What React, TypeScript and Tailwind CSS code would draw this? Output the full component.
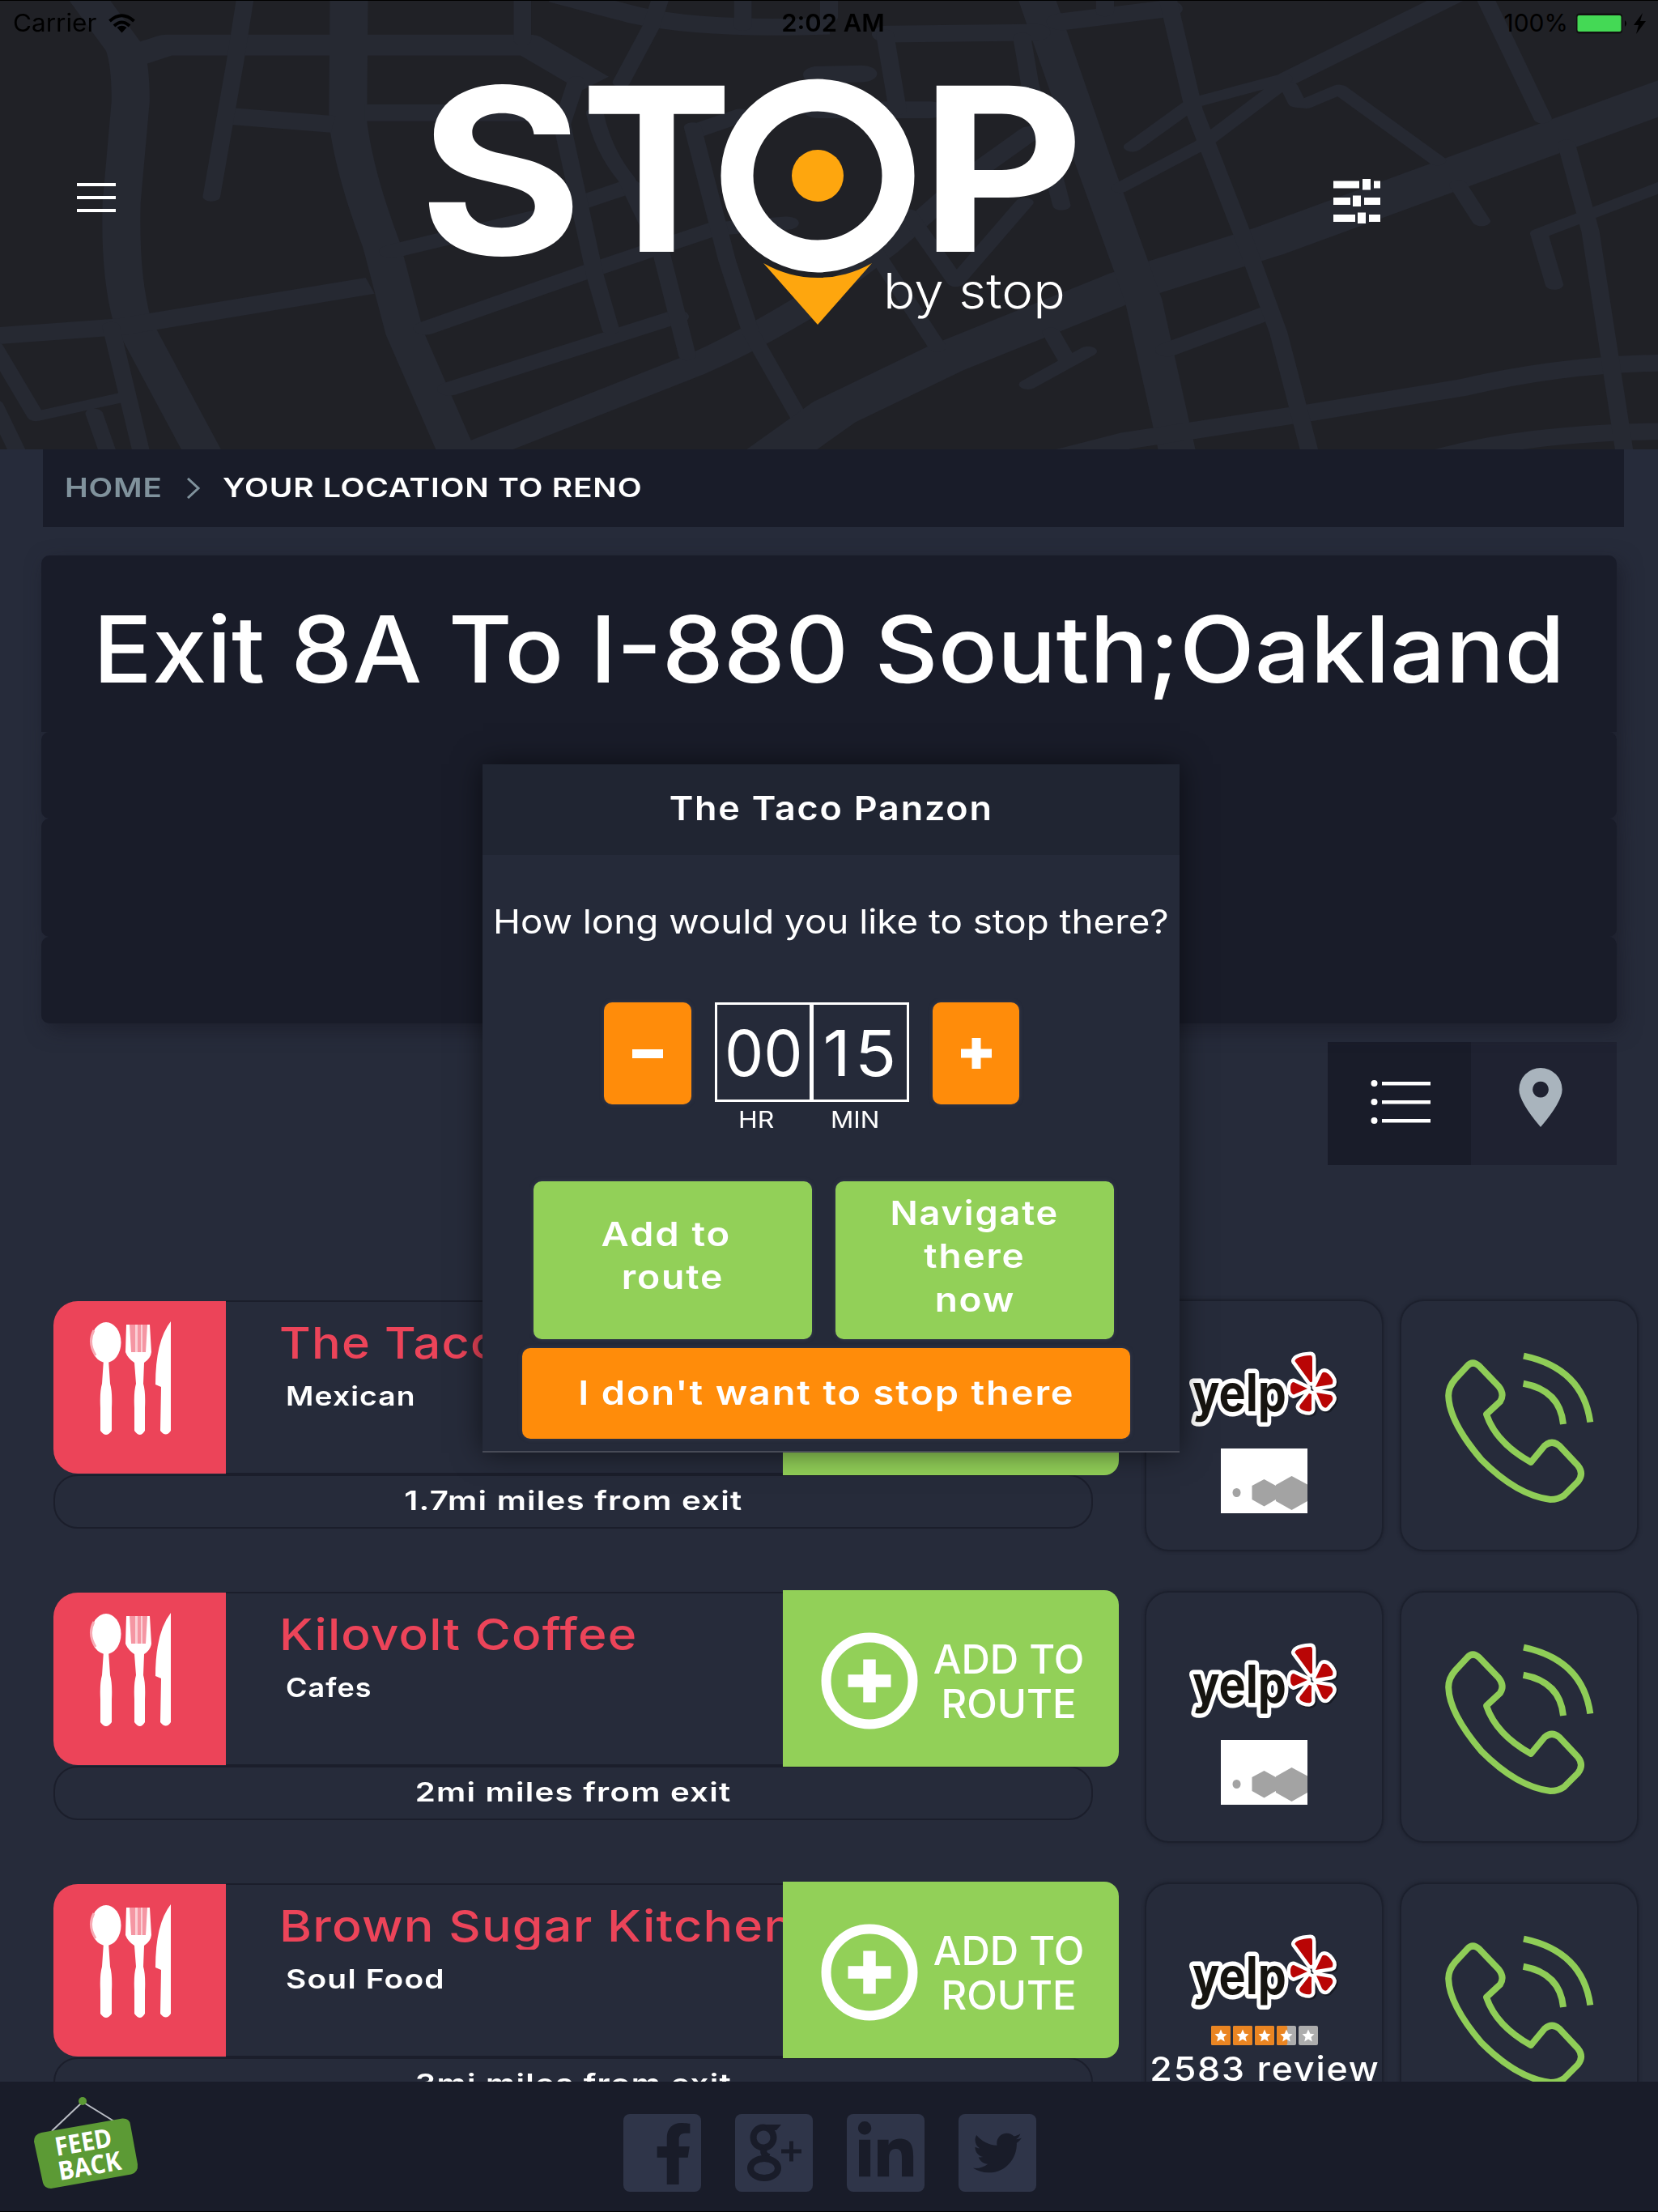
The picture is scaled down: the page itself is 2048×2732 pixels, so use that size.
import type { ReactNode } from "react";
import { FaFacebookF, FaLinkedinIn, FaTwitter } from "react-icons/fa";

function T({ className = "", children }: { className?: string; children: ReactNode }) {
  return <span className={"inline-block whitespace-nowrap " + className}>{children}</span>;
}

function MapBackdrop() {
  return (
    <svg className="absolute inset-0 h-full w-full" viewBox="0 0 2048 555" fill="none" stroke="#262932" preserveAspectRatio="none">
      <g transform="scale(0.6531 0.3571)" strokeLinejoin="round">
        <path strokeWidth="72" d="M165-10 L235 165 Q247 220 247 350 L230 700 Q226 950 250 1110 L385 1570M660-10 L658 420 Q670 600 722 850 L765 1150 L865 1570M250 195 L315 156 L1000 156 L1125 290M880 1575 L1310 1265 Q1420 1180 1568 1010" />
        <path strokeWidth="58" d="M1050-20 L1200 52 Q1330 105 1568 90M435 402 L630 430M690 390 L1080 390M-10 1162 L230 1130 L700 988M1562 262 L1600 258" />
        <path strokeWidth="46" strokeLinecap="round" d="M740 870 L1010 752M1100 700 L1190 645M805 1135 L1110 940 L1350 792M1350 792 L1488 772M850 1345 L1280 1095M1320 450 L1400 400" />
        <path strokeWidth="33" strokeLinecap="round" d="M464-10 L446 200 L400 680M988-10 L988 140M1250-10 L1232 90 L1175 285M1090 280 L1063 430 L1125 950 L1155 1140M1125 390 Q1140 520 1185 620 L1250 870 L1300 1230M1310 440 L1375 900 L1420 1150 L1510 1440M1405-10 L1405 90M210 1130 L268 1570M-10 1200 L68 1440 L230 1375M178 1430 L205 1570M-10 1400 L35 1570" />
      </g>
      <g transform="translate(1024 0) scale(0.6531 0.3571)" strokeLinejoin="round" strokeLinecap="round">
        <path strokeWidth="106" d="M-170 1660 L10 1425 L220 1240 L560 990 L830 835 L1600 320" />
        <path strokeWidth="70" d="M390-20 L500 560 L595 1040 L662 1590" />
        <path strokeWidth="58" d="M110 118 L390 112M-20 258 L62 255M-20 380 L190 380M440 75 L640 30M400 1600 L560 1525 L900 1430 L1200 1340 Q1400 1255 1600 1255M1140 1590 Q1320 1492 1600 1492" />
        <path strokeWidth="46" d="M1190-20 L870 270M640 1210 L830 1082M380 460 L265 610 L110 860 L0 1010" />
        <path strokeWidth="34" d="M640-10 L690 380 L790 850 L850 1150 L910 1570M860 272 L690 355 L574 508M850 300 L705 500 L550 650M870 300 L885 355 L902 358 L965 310 L1150 555M1240-10 L1350 410M1395 500 L1440 800 L1505 1570M1190 640 L1234 765M1590 635 L1343 808 L1372 985M106 120 L130 380M365 130 L380 290 L440 710M150 740 L240 975 L370 700M80 850 L205 1200M420 1150 L450 1245M490 1215 L376 1330M522-10 L522 40M0-10 L0 60" />
      </g>
    </svg>
  );
}

function Logo() {
  return (
    <svg className="h-[320px] w-[820px] overflow-visible" viewBox="520 90 820 320">
      <g fill="#fff" fontFamily="Inter" fontWeight="700" fontSize="282">
        <text x="0" y="0" transform="translate(517 314) scale(1.1 1.01)">S</text>
        <text x="0" y="0" transform="translate(717 311)">T</text>
        <text x="0" y="0" transform="translate(1136 311) scale(1.115 1)">P</text>
      </g>
      <path d="M943 325 A134 134 0 0 0 1077 325 L1010 401Z" fill="#fea60e" />
      <circle cx="1010" cy="217" r="99.5" fill="none" stroke="#fff" strokeWidth="40" />
      <circle cx="1010" cy="217" r="32" fill="#fea60e" />
      <text x="0" y="0" transform="translate(1091 381) scale(1.095 1)" fill="#fff" fontFamily="Inter" fontWeight="300" fontSize="60">by stop</text>
    </svg>
  );
}

function Header() {
  return (
    <header className="relative h-[555px] shrink-0 bg-[#202126]">
      <MapBackdrop />
      <div className="relative flex h-[57px] items-center border-t border-black pb-[1px] text-[30px] text-black">
        <div className="flex w-[900px] items-center pl-[16px]">
          <T className="origin-left scale-x-[1.05]">Carrier</T>
          <svg className="ml-[20px] h-[24px] w-[33px]" viewBox="0 0 33 24" fill="none" stroke="#000" strokeWidth="4">
            <path d="M1.5 9 Q16.500 -4.500 31.500 9M7 15 Q16.500 6 26 15" />
            <path d="M16.500 23.500 L10.500 17 Q16.500 12.500 22.500 17Z" fill="#000" stroke="none" />
          </svg>
        </div>
        <div className="flex w-[257px] justify-center">
          <T className="scale-x-[1.03] font-semibold">2:02 AM</T>
        </div>
        <div className="ml-auto flex items-center pr-[15px]">
          <T className="mr-[9px] origin-right">100%</T>
          <svg className="h-[28px] w-[87px]" viewBox="0 0 87 28">
            <rect x="1" y="1.500" width="57" height="25" rx="4" fill="#111" />
            <rect x="2.500" y="4" width="54" height="20" rx="2" fill="#44d955" />
            <path d="M61 10 Q65 14 61 18Z" fill="#000" />
            <path d="M83 1 L72 16 H78 L75 27 L87 11 H80Z" fill="#000" />
          </svg>
        </div>
      </div>
      <div className="relative flex pl-[95px]">
        <div className="mt-[169px] flex h-[36px] w-[48px] flex-col justify-between">
          <i className="h-[4px] bg-white" />
          <i className="h-[4px] bg-white" />
          <i className="h-[4px] bg-white" />
        </div>
        <div className="ml-[377px] mt-[33px]">
          <Logo />
        </div>
        <svg className="ml-[306px] mt-[164px] h-[57px] w-[60px]" viewBox="0 0 60 57" fill="#fff">
          <path d="M1 2.500h32v9H1zM37 0h10v13.500H37zM51 2.500h8v9h-8zM1 23h21v9H1zM25 20.500h10V34H25zM39 23h20v9H39zM1 44h27v9H1zM31 41.500h10V55H31zM45 44h14v9H45z" />
        </svg>
      </div>
    </header>
  );
}

const seg = "rounded-[10px] bg-[#191c29]";

function ExitCard() {
  return (
    <section className="ml-[51px] mt-[35px] w-[1946px] shrink-0 drop-shadow-[6px_8px_12px_rgba(20,20,32,0.5)]">
      <div className="flex h-[218px] justify-center rounded-t-[10px] bg-[#191c29] pt-[46px]">
        <T className="h-[140px] scale-x-[1.062] text-[114px] font-medium leading-[140px] text-white">Exit 8A To I-880 South;Oakland</T>
      </div>
      <div className={seg + " h-[107px]"} />
      <div className={seg + " h-[146px]"} />
      <div className={seg + " h-[107px]"} />
    </section>
  );
}

function ViewToggle() {
  return (
    <div className="ml-auto mr-[51px] mt-[23px] flex h-[152px] w-[357px] shrink-0">
      <div className="flex w-[177px] items-center justify-center bg-[#191c29] pb-[4px] pl-[4px]">
        <svg className="h-[60px] w-[76px]" viewBox="0 0 76 60" fill="#fff">
          <circle cx="4.500" cy="7" r="4" />
          <circle cx="4.500" cy="30" r="4" />
          <circle cx="4.500" cy="53" r="4" />
          <path d="M14 5h60v4.500H14zM14 28h60v4.500H14zM14 51h60v4.500H14z" />
        </svg>
      </div>
      <div className="flex w-[180px] items-center justify-center bg-[#1f2231] pr-[8px]">
        <svg className="mb-[16px] h-[73px] w-[54px]" viewBox="0 0 54 74" fill="#a9b4bd" fillRule="evenodd">
          <path d="M27 0 A27 27 0 0 1 54 27 Q54 42 27 74 Q0 42 0 27 A27 27 0 0 1 27 0Z M27 17 a10 10 0 1 0 .01 0Z" />
        </svg>
      </div>
    </div>
  );
}

function Utensils() {
  return (
    <svg className="ml-[43px] mt-[24px] h-[144px] w-[106px]" viewBox="0 0 106 144" fill="#fff">
      <ellipse cx="22" cy="27" rx="18.500" ry="25" />
      <path d="M7 12 Q-1 27 9 43" fill="none" stroke="#f8aab4" strokeWidth="3" />
      <path d="M19 48 h6 l2 30 q3 10 2 30 v28 q-7 10-14 0 v-28 q-1-20 2-30z" />
      <path d="M48 5 H74 L77 36 Q76 44 68 47 H55 Q49 44 48 36Z" fill="#f596a3" />
      <path d="M47 5 h4 l2 34 h18 l2-34 h3 l2 34 q-1 8-9 13 l-1 26 q3 10 2 30 v28 q-6 10-13 0 v-28 q-1-20 2-30 l-2-26 q-8-5-11-13z" />
      <path d="M58 5h3v34h-3zM65 5h2v34h-2z" fill="#fbd0d6" />
      <path d="M102 1 V136 q-6 9-13 0 L90 82 L83 79 Q83 25 102 1Z" />
    </svg>
  );
}

function AddToRoute() {
  return (
    <button className="flex h-[218px] w-[415px] items-center rounded-r-[18px] bg-[#92d058] pl-[47px]">
      <svg className="mt-[6px] h-[120px] w-[120px]" viewBox="0 0 120 120" fill="none" stroke="#fff">
        <circle cx="60" cy="60" r="53.500" strokeWidth="12" />
        <path d="M33.500 60h53M60 33.500v53" strokeWidth="15.500" />
      </svg>
      <span className="ml-[9px] flex w-[206px] flex-col items-center pt-[8px] text-[49px] font-medium leading-[55px] text-white">
        <T>ADD TO</T>
        <T>ROUTE</T>
      </span>
    </button>
  );
}

function YelpLogo() {
  const petals =
    "M139.400 21 Q141 15 158.600 14 Q161 14 161 18 V46 Q159 49 157 45Z M165 53 L173 36 Q175.600 33 181 37 Q188 44 186 49 L184 50Z M166 60 L184 63 Q188 66 185 71 L179 78 Q176 80 173 76Z M160 62 V81 Q159 85 150 82 Q143 79 146 75 L157 61Z M155 55 L138 62.500 Q134 61 134 55 Q134 47 138 47Z";
  return (
    <svg className="h-[105px] w-[200px]" viewBox="0 0 200 105" strokeLinejoin="round">
      <g transform="translate(2 2)" opacity="0.35" stroke="#000" strokeWidth="9">
        <path d={petals} />
      </g>
      <path d={petals} fill="#fff" stroke="#fff" strokeWidth="9" />
      <g fontFamily="Inter" fontWeight="700" fontSize="64">
        <text x="0" y="0" transform="translate(13 83) scale(0.87 1)" fill="#161410" stroke="#fff" strokeWidth="11" paintOrder="stroke">yelp</text>
        <path d={petals} fill="#b90505" />
      </g>
    </svg>
  );
}

function NoPhoto() {
  return (
    <svg className="h-[80px] w-[107px] bg-white" viewBox="0 0 107 80" fill="#a3a3a3">
      <ellipse cx="19.500" cy="54.500" rx="5" ry="5.500" />
      <path d="M53.500 38 L68 46 V63 L53.500 71.500 L38.500 63 V46Z" />
      <path d="M87.500 34 L107 44.500 V65 L87.500 76 L68 65 V45Z" />
    </svg>
  );
}

function Rating() {
  const star = "M12 4.500l2.300 5.200 5.200.500-4 3.800 1.300 5.500-4.800-3-4.800 3 1.300-5.500-4-3.800 5.200-.500z";
  return (
    <div className="flex gap-[3px]">
      {[1, 1, 1, 0.55, 0].map((f, i) => (
        <svg key={i} className="h-[24px] w-[24px]" viewBox="0 0 24 24">
          <rect width="24" height="24" rx="2" fill="#adadad" />
          <rect width={24 * f} height="24" rx="2" fill="#ea8522" />
          <path d={star} fill="#fff" />
        </svg>
      ))}
    </div>
  );
}

function Phone() {
  return (
    <svg className="h-[200px] w-[195px]" viewBox="0 0 195 200" fill="none" stroke="#8fcd57" strokeWidth="8" strokeLinejoin="round">
      <path d="M34.600 27 Q41 20 49 27 L73 52 Q81 62 75 71 L58 86.700 Q70 122 113 146 L130 125.500 Q139 118 148 125.500 L171 150 Q179 160 171 170 L154 187 Q147 192 137 192 Q96 187 52 143 Q12 96 11.200 64 Q11 53 19.700 43Z" />
      <path d="M104 14.700 Q177 30 186.300 96.500M103.600 48.700 Q149 57 153 99" />
    </svg>
  );
}

const card = "h-[311px] w-[295px] rounded-[30px] border-[2px] border-[#1c202d] shadow-[0_0_4px_rgba(20,22,32,0.5)]";

type Place = { name: string; kind: string; distance: string; nameFit: string; kindFit: string; reviews?: string };

const places: Place[] = [
  { name: "The Taco Panzon", kind: "Mexican", distance: "1.7mi miles from exit", nameFit: "scale-x-[1.1]", kindFit: "scale-x-[1.13]" },
  { name: "Kilovolt Coffee", kind: "Cafes", distance: "2mi miles from exit", nameFit: "scale-x-[1.118]", kindFit: "scale-x-[1.09]" },
  { name: "Brown Sugar Kitchen", kind: "Soul Food", distance: "3mi miles from exit", nameFit: "scale-x-[1.13]", kindFit: "scale-x-[1.18]", reviews: "2583 review" },
];

function PlaceRow({ p }: { p: Place }) {
  return (
    <div className="flex h-[360px] shrink-0 pl-[66px]">
      <div className="w-[1316px]">
        <div className="flex h-[218px] items-center">
          <div className="mt-[1px] h-[213px] w-[213px] rounded-l-[30px] bg-[#ec4459]">
            <Utensils />
          </div>
          <div className="mt-[1px] h-[215px] w-[688px] overflow-hidden border-y-[2px] border-[#1b1e2b]">
            <div className="ml-[66px] mt-[20px] h-[60px] overflow-hidden text-[54px] font-medium leading-[62px] text-[#ec4459]">
              <T className={"origin-left tracking-[0.02em] " + p.nameFit}>{p.name}</T>
            </div>
            <div className="ml-[74px] mt-[16px] text-[33px] font-semibold leading-[40px] text-white">
              <T className={"origin-left tracking-[0.03em] " + p.kindFit}>{p.kind}</T>
            </div>
          </div>
          <AddToRoute />
        </div>
        <div className="-mt-[1px] flex h-[67px] w-[1284px] items-center justify-center rounded-[30px] border-[2px] border-[#1b1e2b] pb-[1px] text-[33px] font-semibold text-white">
          <T className="scale-x-[1.22] tracking-[0.03em]">{p.distance}</T>
        </div>
      </div>
      <div className={card + " ml-[32px] mt-[1px] flex flex-col items-center"}>
        <div className="ml-[-3px] mt-[53px]">
          <YelpLogo />
        </div>
        {p.reviews ? (
          <>
            <div className="mt-[17px]">
              <Rating />
            </div>
            <T className="mt-[4px] scale-x-[1.09] pl-[2px] text-[41px] font-medium leading-[50px] tracking-[0.04em] text-white">{p.reviews}</T>
          </>
        ) : (
          <div className="mt-[24px]">
            <NoPhoto />
          </div>
        )}
      </div>
      <div className={card + " ml-[20px] mt-[1px] pl-[47px] pt-[53px]"}>
        <Phone />
      </div>
    </div>
  );
}

const btn = "rounded-[10px] shadow-[0_0_5px_rgba(70,74,100,0.6)]";

function Modal() {
  return (
    <div className="absolute left-[596px] top-[944px] h-[850px] w-[861px] border-b-[2px] border-[#484b57] bg-[#252a39] text-[41px] text-white shadow-[0_0_34px_rgba(0,0,0,0.55)]">
      <div className="flex h-[112px] items-center justify-center bg-[#202532] pb-[3px] font-semibold">
        <T className="scale-x-[1.095] tracking-[0.04em]">The Taco Panzon</T>
      </div>
      <div className="mt-[57px] flex h-[52px] items-center justify-center">
        <T className="scale-x-[1.115]">How long would you like to stop there?</T>
      </div>
      <div className="mt-[73px] flex pl-[150px]">
        <button className={btn + " flex h-[126px] w-[108px] items-center justify-center bg-[#ff8c0a]"}>
          <i className="h-[11px] w-[38px] bg-white" />
        </button>
        <div className="ml-[29px] flex h-[123px] w-[240px] border-[3px] border-white text-[78px]">
          <div className="flex w-[119px] items-center justify-center border-r-[5px] border-white">
            <T className="scale-x-[0.98] pt-[2px]">00</T>
          </div>
          <div className="flex w-[115px] items-center justify-center">
            <T className="scale-x-[1.08] pl-[4px] pt-[2px] tracking-[0.06em]">15</T>
          </div>
        </div>
        <button className={btn + " ml-[29px] flex h-[126px] w-[107px] items-center justify-center bg-[#ff8c0a]"}>
          <svg className="h-[38px] w-[38px]" viewBox="0 0 38 38" fill="#fff">
            <path d="M0 13.500h38v11H0zM13.500 0h11v38h-11z" />
          </svg>
        </button>
      </div>
      <div className="flex h-[38px] items-center pl-[316px] text-[28px]">
        <T className="w-[45px] origin-left scale-x-[1.14]">HR</T>
        <T className="ml-[69px] origin-left scale-x-[1.12]">MIN</T>
      </div>
      <div className="mt-[57px] flex gap-[29px] pl-[63px] text-center font-semibold leading-[53.3px]">
        <div className={btn + " flex h-[195px] w-[344px] flex-col items-center bg-[#92d058] pt-[39px]"}>
          <T className="mr-[16px] scale-x-[1.15] tracking-[0.04em]">Add to</T>
          <T className="scale-x-[1.13] tracking-[0.04em]">route</T>
        </div>
        <div className={btn + " flex h-[195px] w-[344px] flex-col items-center bg-[#92d058] pt-[13px]"}>
          <T className="scale-x-[1.1] tracking-[0.04em]">Navigate</T>
          <T className="scale-x-[1.12] tracking-[0.04em]">there</T>
          <T className="scale-x-[1.12] tracking-[0.04em]">now</T>
        </div>
      </div>
      <div className={btn + " ml-[49px] mt-[11px] flex h-[112px] w-[751px] items-center justify-center bg-[#ff8c0a] pb-[1px] font-semibold"}>
        <T className="scale-x-[1.145] tracking-[0.04em]">I don't want to stop there</T>
      </div>
    </div>
  );
}

function FeedbackSign() {
  return (
    <svg className="ml-[36px] mt-[12px] h-[126px] w-[140px]" viewBox="36 2583 140 126">
      <path d="M64 2632 L102 2596 L141 2620" fill="none" stroke="#b9bcc4" strokeWidth="2" />
      <circle cx="102" cy="2595" r="5" fill="#5c9a35" />
      <path d="M51 2634 L151 2616.500 Q160 2616 161 2624 L170 2673 Q171 2683 162 2685.500 L63 2703 Q55 2703 53 2696 L42 2645 Q42 2636 51 2634Z" fill="#5c9a35" />
      <g fill="#fff" fontFamily="Open Sans" fontWeight="700" fontSize="32">
        <text x="0" y="0" transform="translate(70 2663) rotate(-10) scale(0.92 1)">FEED</text>
        <text x="0" y="0" transform="translate(74 2693) rotate(-10) scale(0.92 1)">BACK</text>
      </g>
    </svg>
  );
}

const tile = "flex h-[96px] w-[96px] items-center justify-center rounded-[8px] bg-[#2f3549] text-[#191c29]";

function Footer() {
  return (
    <footer className="flex h-[161px] shrink-0 border-b border-black bg-[#191c29]">
      <FeedbackSign />
      <div className="ml-[594px] mt-[40px] flex gap-[42px]">
        <div className={tile + " pl-[28px] pt-[1px]"}>
          <FaFacebookF className="h-[76px] w-[48px]" />
        </div>
        <div className={tile}>
          <svg className="h-[96px] w-[96px]" viewBox="0 0 96 96" fill="none" stroke="#191c29">
            <ellipse cx="35" cy="29" rx="12.500" ry="12.500" strokeWidth="8" transform="rotate(-12 35 29)" />
            <path d="M36 13 H57 L51 20 H42Z" fill="#191c29" stroke="none" />
            <path d="M36 43 Q33 50 42 53" strokeWidth="8" />
            <ellipse cx="36" cy="67" rx="17" ry="12" strokeWidth="8" />
            <path d="M57 46h25M69.500 33.500v25" strokeWidth="5" />
          </svg>
        </div>
        <div className={tile}>
          <FaLinkedinIn className="h-[78px] w-[78px]" />
        </div>
        <div className={tile}>
          <FaTwitter className="h-[60px] w-[60px]" />
        </div>
      </div>
    </footer>
  );
}

export default function App() {
  return (
    <div className="relative flex h-[2732px] w-[2048px] flex-col overflow-hidden bg-[#262b3a] font-['Inter',sans-serif]">
      <Header />
      <main className="flex min-h-0 flex-1 flex-col overflow-hidden">
        <nav className="ml-[53px] flex h-[96px] w-[1953px] shrink-0 items-center bg-[#191c29] pb-[1px] pl-[27px] text-[33px] font-semibold text-white">
          <T className="w-[120px] origin-left scale-x-[1.17] tracking-[0.02em] text-[#80929c]">HOME</T>
          <svg className="ml-[30px] h-[26px] w-[18px]" viewBox="0 0 18 26" fill="none" stroke="#80929c" strokeWidth="3">
            <path d="M2 1 L15 13 L2 25" />
          </svg>
          <T className="ml-[27px] origin-left scale-x-[1.18] tracking-[0.02em]">YOUR LOCATION TO RENO</T>
        </nav>
        <ExitCard />
        <ViewToggle />
        <div className="mt-[165px] flex flex-col">
          {places.map((p) => (
            <PlaceRow key={p.name} p={p} />
          ))}
        </div>
      </main>
      <Footer />
      <Modal />
    </div>
  );
}
